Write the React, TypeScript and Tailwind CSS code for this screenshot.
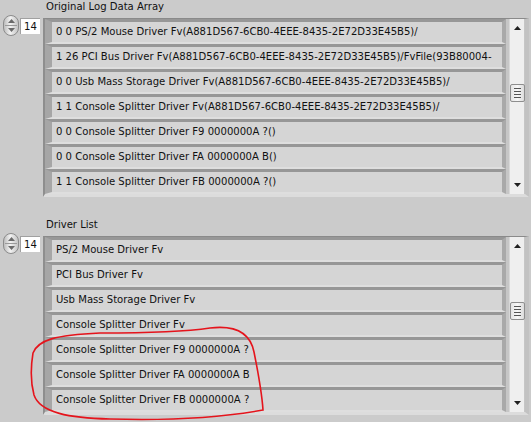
const logRows = [
  "0 0 PS/2 Mouse Driver Fv(A881D567-6CB0-4EEE-8435-2E72D33E45B5)/",
  "1 26 PCI Bus Driver Fv(A881D567-6CB0-4EEE-8435-2E72D33E45B5)/FvFile(93B80004-",
  "0 0 Usb Mass Storage Driver Fv(A881D567-6CB0-4EEE-8435-2E72D33E45B5)/",
  "1 1 Console Splitter Driver Fv(A881D567-6CB0-4EEE-8435-2E72D33E45B5)/",
  "0 0 Console Splitter Driver F9 0000000A ?()",
  "0 0 Console Splitter Driver FA 0000000A B()",
  "1 1 Console Splitter Driver FB 0000000A ?()",
];

const driverRows = [
  "PS/2 Mouse Driver Fv",
  "PCI Bus Driver Fv",
  "Usb Mass Storage Driver Fv",
  "Console Splitter Driver Fv",
  "Console Splitter Driver F9 0000000A ?",
  "Console Splitter Driver FA 0000000A B",
  "Console Splitter Driver FB 0000000A ?",
];

const Spinner = ({ value }: { value: string }) => (
  <div className="flex items-center pl-[3px]">
    <div className="flex h-[21px] w-[16px] flex-col items-center justify-center rounded-full border border-[#8c8c8c] bg-[linear-gradient(90deg,#bdbdbd,#f2f2f2_45%,#c4c4c4)]">
      <svg width="7" height="4" viewBox="0 0 7 4">
        <path d="M3.5 0L7 4H0z" fill="#6a6a6a" />
      </svg>
      <div className="my-[2px] h-px w-[12px] bg-[#9a9a9a]" />
      <svg width="7" height="4" viewBox="0 0 7 4">
        <path d="M0 0h7L3.5 4z" fill="#6a6a6a" />
      </svg>
    </div>
    <div className="ml-px h-[16px] w-[20px] border-l border-t border-[#a0a0a0] bg-white pl-[3px] leading-[15px]">
      {value}
    </div>
  </div>
);

const Arrow = ({ down }: { down?: boolean }) => (
  <svg width="7" height="4" viewBox="0 0 7 4">
    <path d={down ? "M0 0h7L3.5 4z" : "M3.5 0L7 4H0z"} fill="#202020" />
  </svg>
);

const ArrayControl = ({ label, rows }: { label: string; rows: string[] }) => (
  <div className="flex h-[218px] shrink-0">
    <div className="w-[43px] shrink-0 pt-[15px]">
      <Spinner value="14" />
    </div>
    <div className="flex w-[486px] flex-col">
      <div className="h-[18px] pl-[3px] leading-[14px]">{label}</div>
      <div className="flex border-b-[3px] border-l-2 border-r-[4px] border-t border-b-[#dcdcdc] border-l-[#8e8e8e] border-r-[#c2c2c2] border-t-[#8a8a8a] bg-[#c6c6c6]">
        <div className="flex w-[461px] flex-col">
          {rows.map((row, i) => (
            <div
              key={i}
              className="h-[25px] border-b-2 border-l-[7px] border-r-[4px] border-t-[3px] border-b-[#dedede] border-l-[#a6a6a6] border-r-[#a9a9a9] border-t-[#979797] bg-[#d5d5d5]"
            >
              <div className="overflow-hidden whitespace-nowrap pl-[4px] leading-[20px]">
                {row}
              </div>
            </div>
          ))}
        </div>
        <div className="ml-[3px] flex w-[15px] flex-col items-center border-l border-[#d8d8d8] bg-[#efefef] pb-[7px] pt-[7px]">
          <Arrow />
          <div className="mt-[54px] flex h-[18px] w-[15px] flex-col items-center justify-center gap-[2px] rounded-[2px] border border-[#8e8e8e] bg-[linear-gradient(90deg,#e4e4e4,#f8f8f8,#dcdcdc)]">
            <div className="h-px w-[7px] bg-[#555]" />
            <div className="h-px w-[7px] bg-[#555]" />
            <div className="h-px w-[7px] bg-[#555]" />
            <div className="h-px w-[7px] bg-[#555]" />
          </div>
          <div className="flex-1" />
          <Arrow down />
        </div>
      </div>
    </div>
  </div>
);

const App = () => {
  return (
    <div className="relative h-[422px] w-[531px] overflow-hidden bg-[#cbcbcb] font-['DejaVu_Sans_Condensed','Liberation_Sans',sans-serif] text-[11.2px] text-[#111]">
      <ArrayControl label="Original Log Data Array" rows={logRows} />
      <ArrayControl label="Driver List" rows={driverRows} />
      <svg
        className="absolute left-0 top-0"
        width="531"
        height="422"
        viewBox="0 0 531 422"
        fill="none"
      >
        <path
          d="M33 353C38 340 55 335 100 333C150 333 190 331 210 328C235 325 250 332 254 352C258 372 262 395 263 410C230 416 180 421 110 419C70 418 40 413 34 395C30 380 31 365 33 353"
          stroke="#e5141c"
          strokeWidth="1.6"
        />
      </svg>
    </div>
  );
};

export default App;
